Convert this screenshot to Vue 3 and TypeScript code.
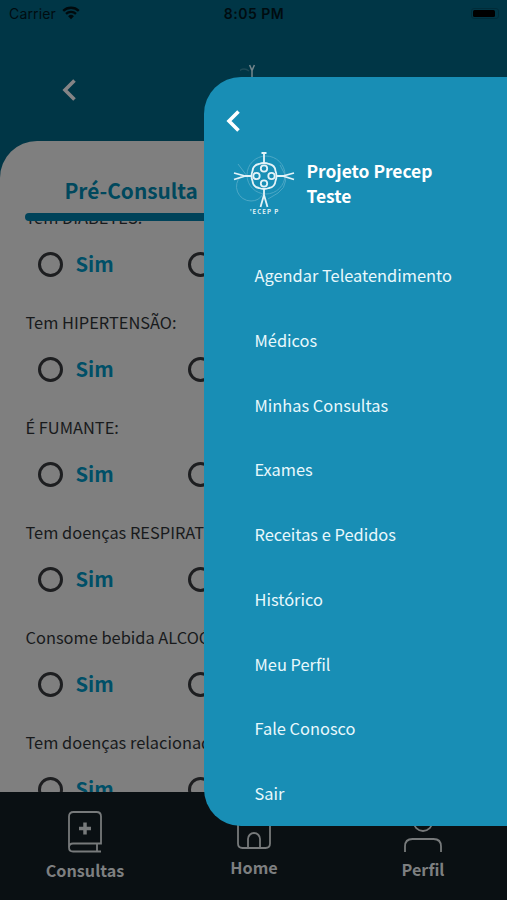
<script setup lang="ts">
interface Question {
  id: number
  label: string
}

const questions: Question[] = [
  { id: 1, label: 'Tem DIABETES:' },
  { id: 2, label: 'Tem HIPERTENSÃO:' },
  { id: 3, label: 'É FUMANTE:' },
  { id: 4, label: 'Tem doenças RESPIRATÓRIAS:' },
  { id: 5, label: 'Consome bebida ALCOÓLICA:' },
  { id: 6, label: 'Tem doenças relacionadas:' },
]

const menu: string[] = [
  'Agendar Teleatendimento',
  'Médicos',
  'Minhas Consultas',
  'Exames',
  'Receitas e Pedidos',
  'Histórico',
  'Meu Perfil',
  'Fale Conosco',
  'Sair',
]
</script>

<template>
  <div class="phone">
    <header class="status">
      <div class="carrier">
        <span>Carrier</span>
        <svg class="wifi" viewBox="0 0 18 14" width="18" height="14">
          <path d="M1.2 4.9a11.2 11.2 0 0 1 15.6 0" />
          <path d="M4 7.8a7.2 7.2 0 0 1 10 0" />
          <path class="dot" d="M9 13.2 6.1 10.3a4.1 4.1 0 0 1 5.8 0z" />
        </svg>
      </div>
      <span class="clock">8:05 PM</span>
      <span class="battery"><i /></span>
    </header>

    <div class="topbar">
      <svg class="back" viewBox="0 0 16 24" width="16" height="24"><path d="M12.5 2.5 3 12l9.5 9.5" /></svg>
      <svg class="brand" viewBox="0 0 24 26" width="24" height="26">
        <path d="M9.6 1 12 6.5 14.4 1M12 6v20" />
        <path class="faint" d="M-1 7q5-4 10 0" />
      </svg>
    </div>

    <main class="sheet">
      <h1 class="tab">Pré-Consulta</h1>
      <div class="bar" />
      <div class="list">
        <section v-for="q in questions" :key="q.id" class="question">
          <p class="label">{{ q.label }}</p>
          <div class="options">
            <span class="radio" />
            <span class="answer">Sim</span>
            <span class="radio" />
          </div>
        </section>
      </div>
    </main>

    <nav class="tabs">
      <a class="item">
        <svg viewBox="0 0 36 44" width="36" height="44">
          <path d="M2 37V6.500Q2 2 6.500 2H29.500Q34 2 34 6.500V33.500H6Q2 33.500 2 37.500T6 41.500H34M30 34V41" />
          <path class="plus" d="M18 12.500V24.500M12 18.500H24" />
        </svg>
        <span>Consultas</span>
      </a>
      <a class="item home">
        <svg viewBox="0 0 36 44" width="36" height="44">
          <path d="M2 17V36.500Q2 41 6.500 41H29.500Q34 41 34 36.500V17L18 4z" />
          <path d="M12 41V32a6 6 0 0 1 12 0V41" />
        </svg>
        <span>Home</span>
      </a>
      <a class="item profile">
        <svg viewBox="0 0 40 44" width="40" height="44">
          <circle cx="20" cy="12.500" r="9.500" />
          <path d="M2 43V37.500Q2 30 9.500 30H30.500Q38 30 38 37.500V43" />
        </svg>
        <span>Perfil</span>
      </a>
    </nav>

    <aside class="drawer">
      <svg class="close" viewBox="0 0 16 24" width="16" height="24"><path d="M12.500 2.500 3 12l9.500 9.500" /></svg>
      <div class="account">
        <svg class="logo" viewBox="0 0 62 62" width="62" height="62">
          <g class="faint">
            <circle cx="33" cy="23" r="19" />
            <path d="M8 24a14.500 14.500 0 0 0 10 25q8 0 12-7M5 12l9 12M47 13q12 18-2 28l-10 6" />
          </g>
          <g class="body">
            <path d="M31 1V12M28.500 1h5M12 24H19M1 21 12 24 1 27.500M43 24H50M61 21 50 24 61 27.500M31 36V44M27.500 55 31 43 34.500 55" />
            <path d="M26 12Q31 10 36 12Q42 13 42.500 19Q44.500 24 42.500 29Q42 35 36 36Q31 38 26 36Q20 35 19.500 29Q17.500 24 19.500 19Q20 13 26 12Z" />
            <circle cx="31" cy="16.500" r="3.200" />
            <circle cx="31" cy="31.500" r="3.200" />
            <circle cx="23.500" cy="24" r="3.200" />
            <circle cx="38.500" cy="24" r="3.200" />
          </g>
          <text x="31.500" y="61.500" text-anchor="middle">'ECEP P</text>
        </svg>
        <h2>Projeto Precep<br />Teste</h2>
      </div>
      <ul class="menu">
        <li v-for="entry in menu" :key="entry">{{ entry }}</li>
      </ul>
    </aside>
  </div>
</template>

<style>
body {
  margin: 0;
}
</style>

<style scoped>
.phone {
  position: relative;
  display: flex;
  flex-direction: column;
  width: 507px;
  height: 900px;
  overflow: hidden;
  background: #003646;
  font-family: 'Noto Sans CJK SC', 'Noto Sans', sans-serif;
}
.status {
  display: grid;
  grid-template-columns: 1fr auto 1fr;
  align-items: center;
  height: 28px;
  padding: 0 6px 0 9px;
  box-sizing: border-box;
  font: 14px/28px Inter, sans-serif;
  letter-spacing: 0.15px;
  color: #000c10;
}
.carrier {
  display: flex;
  align-items: center;
  gap: 6px;
}
.wifi {
  margin-top: -2px;
}
.wifi path {
  fill: none;
  stroke: #000a0d;
  stroke-width: 2.3;
}
.wifi .dot {
  fill: #000a0d;
  stroke: none;
}
.clock {
  margin-left: -2px;
  font-weight: 600;
  letter-spacing: 0.5px;
}
.battery {
  justify-self: end;
  width: 28px;
  height: 11px;
  margin: -1px 2px 0 0;
  padding: 1px;
  box-sizing: border-box;
  border: 1px solid #002c39;
  border-radius: 3px;
}
.battery i {
  display: block;
  width: 22px;
  height: 7px;
  background: #000;
  border-radius: 1.5px;
}
.topbar {
  display: flex;
  align-items: flex-start;
  height: 113px;
  padding-left: 61px;
}
.back,
.close {
  fill: none;
  stroke: #858486;
  stroke-width: 3.6;
}
.back {
  margin: 50px 0 0 1px;
}
.brand {
  margin: 36px 0 0 162px;
  fill: none;
  stroke: #74868c;
  stroke-width: 1.5;
}
.faint {
  opacity: 0.25;
}
.sheet {
  display: flex;
  flex-direction: column;
  height: 651px;
  overflow: hidden;
  background: #7f7f7f;
  border-top-left-radius: 37px;
}
.tab {
  margin: 35px 0 0 64.5px;
  font-size: 20.8px;
  line-height: 28px;
  font-weight: 700;
  color: #00485d;
}
.bar {
  flex: none;
  height: 8px;
  margin: 9px 0 0 25px;
  background: #00435a;
  border-radius: 4px 0 0 4px;
}
.list {
  flex: 1;
  overflow: hidden;
  padding-left: 25.5px;
}
.question {
  height: 105px;
}
.question:first-child {
  margin-top: -16px;
}
.label {
  margin: 0;
  font-size: 16.4px;
  line-height: 25px;
  white-space: nowrap;
  color: #181a1c;
}
.options {
  display: flex;
  align-items: center;
  height: 30px;
  margin: 19px 0 0 12px;
}
.radio {
  width: 25px;
  height: 25px;
  box-sizing: border-box;
  border: 3px solid #1d1e20;
  border-radius: 50%;
}
.answer {
  width: 112px;
  margin: 0 0 0 13px;
  font-size: 20.2px;
  line-height: 30px;
  font-weight: 700;
  color: #004f67;
}
.tabs {
  display: grid;
  grid-template-columns: repeat(3, 169px);
  height: 108px;
  background: #0a1013;
}
.item {
  display: flex;
  flex-direction: column;
  align-items: center;
  padding-top: 18px;
  font-size: 16.2px;
  line-height: 26px;
  font-weight: 700;
  color: #7d7f80;
}
.item span {
  margin: 3px 0 0 1px;
}
.item svg {
  fill: none;
  stroke: #777a7b;
  stroke-width: 1.8;
}
.item .plus {
  stroke-width: 3.5;
}
.home {
  padding-top: 15px;
}
.profile {
  padding-top: 17px;
}
.drawer {
  position: absolute;
  top: 77px;
  left: 203.5px;
  width: 304px;
  height: 749px;
  box-sizing: border-box;
  padding-top: 32px;
  background: #188eb5;
  border-radius: 37px 0 0 37px;
  color: #fff;
}
.close {
  display: block;
  margin-left: 22px;
  stroke: #fff;
}
.account {
  display: flex;
  gap: 12px;
  margin: 19px 0 0 29px;
}
.logo {
  flex: none;
  fill: none;
  stroke: #e4f3f8;
  stroke-width: 1.8;
}
.logo .faint {
  stroke-width: 1;
}
.logo text {
  fill: #e4f3f8;
  stroke: none;
  font-size: 6px;
  font-weight: 700;
  letter-spacing: 1px;
}
.account h2 {
  margin: 6px 0 0;
  font-size: 17.4px;
  line-height: 25px;
  font-weight: 700;
}
.menu {
  margin: 48px 0 0;
  padding: 0 0 0 51px;
  list-style: none;
}
.menu li {
  height: 64.75px;
  font-size: 16.4px;
  line-height: 26px;
  color: #e9f8fc;
}
</style>
